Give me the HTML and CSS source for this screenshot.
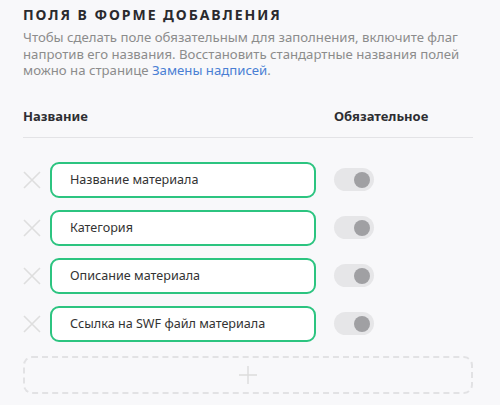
FILE: index.html
```html
<!DOCTYPE html>
<html lang="ru">
<head>
<meta charset="utf-8">
<link rel="stylesheet" href="styles.css">
</head>
<body>
<div class="page">
  <h2 class="title">Поля в форме добавления</h2>
  <p class="desc">Чтобы сделать поле обязательным для заполнения, включите флаг напротив его названия. Восстановить стандартные названия полей можно на странице <a href="#">Замены надписей</a>.</p>
  <div class="head">
    <span class="h-name">Название</span>
    <span class="h-req">Обязательное</span>
  </div>
  <div class="rows">
    <div class="row">
      <span class="del"><svg width="18" height="18" viewBox="0 0 18 18"><path d="M1 1L17 17M17 1L1 17" stroke="#dedede" stroke-width="1.6" fill="none"/></svg></span>
      <div class="field">Название материала</div>
      <span class="toggle"><span class="knob"></span></span>
    </div>
    <div class="row">
      <span class="del"><svg width="18" height="18" viewBox="0 0 18 18"><path d="M1 1L17 17M17 1L1 17" stroke="#dedede" stroke-width="1.6" fill="none"/></svg></span>
      <div class="field">Категория</div>
      <span class="toggle"><span class="knob"></span></span>
    </div>
    <div class="row">
      <span class="del"><svg width="18" height="18" viewBox="0 0 18 18"><path d="M1 1L17 17M17 1L1 17" stroke="#dedede" stroke-width="1.6" fill="none"/></svg></span>
      <div class="field">Описание материала</div>
      <span class="toggle"><span class="knob"></span></span>
    </div>
    <div class="row">
      <span class="del"><svg width="18" height="18" viewBox="0 0 18 18"><path d="M1 1L17 17M17 1L1 17" stroke="#dedede" stroke-width="1.6" fill="none"/></svg></span>
      <div class="field">Ссылка на SWF файл материала</div>
      <span class="toggle"><span class="knob"></span></span>
    </div>
  </div>
  <div class="add"><svg width="18" height="18" viewBox="0 0 18 18"><path d="M9 0V18M0 9H18" stroke="#dcdcdc" stroke-width="1.4" fill="none"/></svg></div>
</div>
</body>
</html>
```
FILE: styles.css
```css
* { box-sizing: border-box; }
html, body { margin: 0; padding: 0; background: #f8f8fa; }
body { font-family: "Noto Sans", "Open Sans", sans-serif; }
.page { padding: 5px 27px 0 23px; width: 500px; }
.title {
  margin: 0;
  font-size: 14px;
  font-weight: 700;
  text-transform: uppercase;
  letter-spacing: 1.95px;
  color: #2a2a2e;
  line-height: 20px;
}
.desc {
  margin: 4px 0 0;
  font-size: 13.2px;
  line-height: 16.5px;
  color: #8c8c8c;
}
.desc a { color: #4a7fd4; text-decoration: none; }
.head {
  display: flex;
  margin-top: 28px;
  padding-bottom: 12px;
  border-bottom: 1px solid #e3e3e6;
  font-size: 13px;
  font-weight: 700;
  color: #2e2e32;
  line-height: 18px;
}
.h-name { width: 311px; }
.rows { display: flex; flex-direction: column; gap: 12px; margin-top: 24px; }
.row { display: flex; align-items: center; height: 36px; }
.del { width: 27px; display: flex; align-items: center; }
.del svg { display: block; }
.field {
  width: 266px;
  height: 36px;
  border: 2px solid #2cc480;
  border-radius: 9px;
  background: #fff;
  padding: 0 0 0 18px;
  display: flex;
  align-items: center;
  font-size: 12.6px;
  color: #333;
}
.toggle {
  margin-left: 18px;
  width: 40px;
  height: 23px;
  border-radius: 12px;
  background: #e6e6e8;
  position: relative;
}
.knob {
  position: absolute;
  right: 4px;
  top: 3.5px;
  width: 16px;
  height: 16px;
  border-radius: 50%;
  background: #a0a0a3;
}
.add {
  margin-top: 14px;
  height: 38px;
  border: 2px dashed #e2e2e4;
  border-radius: 9px;
  display: flex;
  align-items: center;
  justify-content: center;
}
.add svg { display: block; }
```
